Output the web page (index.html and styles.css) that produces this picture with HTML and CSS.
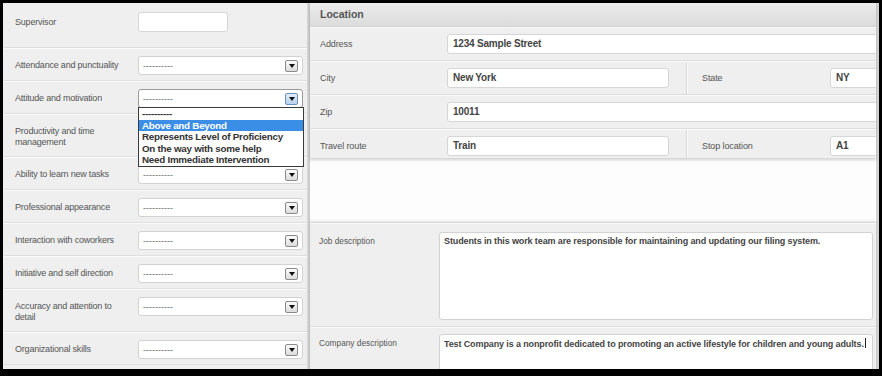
FILE: index.html
```html
<!DOCTYPE html>
<html lang="en">
<head>
    <meta charset="UTF-8">
    <meta name="viewport" content="width=device-width, initial-scale=1.0">
    <title>Placement Evaluation</title>
    <link rel="stylesheet" href="styles.css">
</head>
<body>
    <div class="screen">
        <div class="ratings">
            <div class="row row-first">
                <div class="label">Supervisor</div>
                <div class="textinput"></div>
            </div>
            <div class="row">
                <div class="label">Attendance and punctuality</div>
                <div class="select"><span class="value">----------</span><span class="arrow"></span></div>
            </div>
            <div class="row">
                <div class="label">Attitude and motivation</div>
                <div class="select open">
                    <span class="value">----------</span><span class="arrow"></span>
                    <ul class="options">
                        <li>----------</li>
                        <li class="active">Above and Beyond</li>
                        <li>Represents Level of Proficiency</li>
                        <li>On the way with some help</li>
                        <li>Need Immediate Intervention</li>
                    </ul>
                </div>
            </div>
            <div class="row">
                <div class="label">Productivity and time management</div>
                <!-- hidden under the open list above -->
                <div class="select"><span class="value"></span><span class="arrow"></span></div>
            </div>
            <div class="row">
                <div class="label">Ability to learn new tasks</div>
                <div class="select"><span class="value">----------</span><span class="arrow"></span></div>
            </div>
            <div class="row">
                <div class="label">Professional appearance</div>
                <div class="select"><span class="value">----------</span><span class="arrow"></span></div>
            </div>
            <div class="row">
                <div class="label">Interaction with coworkers</div>
                <div class="select"><span class="value">----------</span><span class="arrow"></span></div>
            </div>
            <div class="row">
                <div class="label">Initiative and self direction</div>
                <div class="select"><span class="value">----------</span><span class="arrow"></span></div>
            </div>
            <div class="row">
                <div class="label">Accuracy and attention to detail</div>
                <div class="select"><span class="value">----------</span><span class="arrow"></span></div>
            </div>
            <div class="row">
                <div class="label">Organizational skills</div>
                <div class="select"><span class="value">----------</span><span class="arrow"></span></div>
            </div>
        </div>

        <div class="divider"></div>

        <div class="details">
            <div class="card location">
                <div class="card-head">Location</div>
                <div class="frow">
                    <div class="cell">
                        <div class="flabel">Address</div>
                        <div class="field field-long">1234 Sample Street</div>
                    </div>
                </div>
                <div class="frow">
                    <div class="cell half">
                        <div class="flabel">City</div>
                        <div class="field field-mid">New York</div>
                    </div>
                    <div class="cell side">
                        <div class="flabel">State</div>
                        <div class="field field-short">NY</div>
                    </div>
                </div>
                <div class="frow">
                    <div class="cell">
                        <div class="flabel">Zip</div>
                        <div class="field field-long">10011</div>
                    </div>
                </div>
                <div class="frow">
                    <div class="cell half">
                        <div class="flabel">Travel route</div>
                        <div class="field field-mid">Train</div>
                    </div>
                    <div class="cell side">
                        <div class="flabel">Stop location</div>
                        <div class="field field-short">A1</div>
                    </div>
                </div>
            </div>

            <div class="card texts">
                <div class="trow">
                    <div class="tlabel">Job description</div>
                    <div class="textbox">Students in this work team are responsible for maintaining and updating our filing system.</div>
                </div>
                <div class="trow trow-last">
                    <div class="tlabel">Company description</div>
                    <div class="textbox textbox-short">Test Company is a nonprofit dedicated to promoting an active lifestyle for children and young adults.<span class="caret"></span></div>
                </div>
            </div>
        </div>
    </div>
</body>
</html>
```

FILE: styles.css
```css
body {
    margin: 0;
    height: 376px;
    overflow: hidden;
    background: #000;
    font-family: "Liberation Sans", Arial, sans-serif;
}
.screen {
    display: flex;
    margin: 3px 3px 0;
    width: 876px;
    height: 366px;
    background: #efefef;
    overflow: hidden;
}

/* left column: ratings */
.ratings {
    width: 304px;
    flex-shrink: 0;
    background: #efefef;
}
.row {
    display: flex;
    align-items: flex-start;
    padding: 7px 0 5px 12px;
    border-top: 1px solid #fafafa;
    border-bottom: 1px solid #dfdfdf;
}
.row-first {
    align-items: center;
    padding: 9px 0 15px 12px;
    border-top: none;
}
.label {
    width: 123px;
    box-sizing: border-box;
    padding-right: 13px;
    margin: 4px 0 3px;
    font-size: 9px;
    letter-spacing: -0.2px;
    line-height: 11px;
    color: #555;
}
.row-first .label {
    margin: 0;
}
.textinput {
    width: 90px;
    height: 20px;
    box-sizing: border-box;
    background: #fff;
    border: 1px solid #d6d6d6;
    border-radius: 3px;
}
.select {
    position: relative;
    display: flex;
    align-items: center;
    justify-content: space-between;
    width: 165px;
    height: 19px;
    box-sizing: border-box;
    padding: 0 4px;
    background: #fff;
    border: 1px solid #d2d2d2;
    border-radius: 3px;
}
.select .value {
    font-size: 9px;
    color: #666;
}
.arrow {
    display: flex;
    align-items: center;
    justify-content: center;
    width: 13px;
    height: 12px;
    box-sizing: border-box;
    border: 1px solid #8a8a8a;
    border-radius: 2px;
    background: linear-gradient(#fbfbfb, #dcdcdc);
}
.arrow::after {
    content: "";
    border-left: 3px solid transparent;
    border-right: 3px solid transparent;
    border-top: 4px solid #111;
}
.select.open {
    border-color: #9a9a9a;
}
.select.open .arrow {
    border-color: #6d8fb8;
    background: linear-gradient(#e2eefa, #b8d2ee);
}
.options {
    position: absolute;
    top: 100%;
    left: -1px;
    z-index: 5;
    width: 166px;
    box-sizing: border-box;
    margin: 0;
    padding: 0;
    list-style: none;
    background: #fff;
    border: 1px solid #3a3a3a;
    font-size: 9.8px;
    font-weight: bold;
    letter-spacing: -0.25px;
    line-height: 11.6px;
    color: #333;
}
.options li {
    padding-left: 3px;
    white-space: nowrap;
}
.options .active {
    background: #3a8ee6;
    color: #fff;
}

.divider {
    width: 3px;
    flex-shrink: 0;
    background: linear-gradient(to right, #dadada, #c6c6c6);
}

/* right column: details */
.details {
    width: 566px;
    flex-shrink: 0;
    background: #fdfdfd;
    border-right: 3px solid #d4d4d4;
}
.card {
    background: #efefef;
}
.location {
    height: 155px;
    overflow: hidden;
    box-shadow: 0 2px 3px rgba(0, 0, 0, 0.18);
}
.card-head {
    height: 24px;
    box-sizing: border-box;
    padding-left: 10px;
    line-height: 23px;
    font-size: 10.5px;
    font-weight: bold;
    color: #555;
    background: linear-gradient(#ebebeb, #dcdcdc);
    border-bottom: 1px solid #d3d3d3;
}
.frow {
    display: flex;
    height: 34px;
    box-sizing: border-box;
    border-top: 1px solid #fafafa;
    border-bottom: 1px solid #dcdcdc;
}
.cell {
    display: flex;
    align-items: center;
    padding-left: 10px;
}
.half {
    width: 377px;
    flex-shrink: 0;
    box-sizing: border-box;
    border-right: 1px solid #d9d9d9;
    box-shadow: 1px 0 0 #fafafa;
}
.side {
    padding-left: 15px;
}
.flabel {
    width: 127px;
    flex-shrink: 0;
    font-size: 9px;
    letter-spacing: -0.1px;
    color: #555;
}
.side .flabel {
    width: 128px;
}
.field {
    height: 20px;
    box-sizing: border-box;
    flex-shrink: 0;
    padding-left: 5px;
    background: #fff;
    border: 1px solid #d6d6d6;
    border-radius: 3px;
    font-size: 10px;
    font-weight: bold;
    letter-spacing: -0.2px;
    line-height: 18px;
    color: #444;
}
.field-long {
    width: 440px;
}
.field-mid {
    width: 222px;
}
.field-short {
    width: 100px;
}

.texts {
    margin-top: 64px;
    border-top: 1px solid #d6d6d6;
    box-shadow: 0 -1px 3px rgba(0, 0, 0, 0.1);
}
.trow {
    display: flex;
    align-items: flex-start;
    padding: 8px 3px 6px 9px;
    border-top: 1px solid #fafafa;
    border-bottom: 1px solid #dcdcdc;
}
.trow-last {
    padding-top: 6px;
}
.tlabel {
    width: 120px;
    flex-shrink: 0;
    margin-top: 4px;
    font-size: 8.3px;
    line-height: 11px;
    color: #555;
}
.textbox {
    flex: 1;
    height: 88px;
    box-sizing: border-box;
    padding: 3px 4px;
    background: #fff;
    border: 1px solid #d2d2d2;
    border-radius: 3px;
    font-size: 9px;
    font-weight: bold;
    letter-spacing: -0.12px;
    line-height: 11px;
    color: #444;
}
.textbox-short {
    height: 60px;
    white-space: nowrap;
}
.caret {
    display: inline-block;
    width: 1px;
    height: 10px;
    margin-left: 1px;
    vertical-align: -1px;
    background: #222;
}
```
